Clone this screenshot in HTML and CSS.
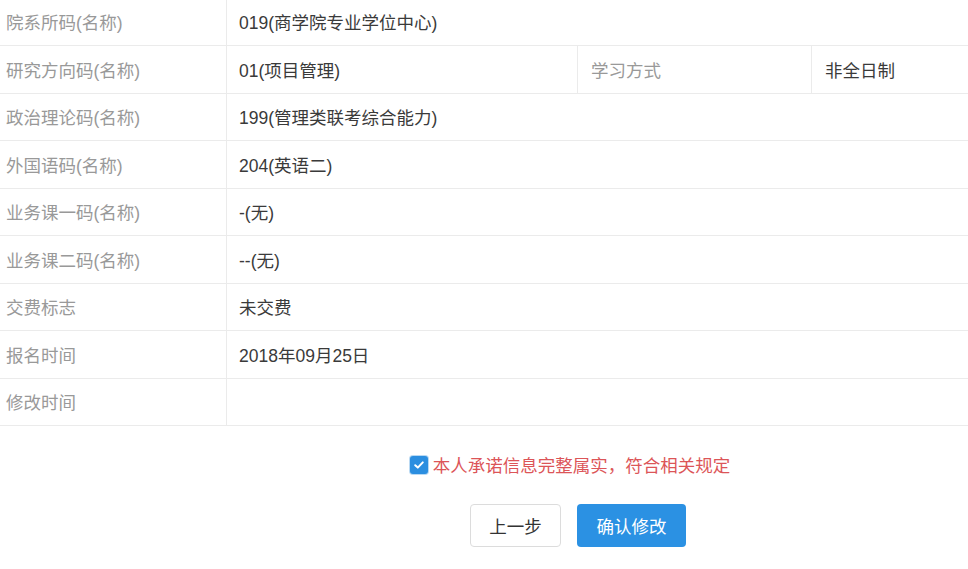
FILE: index.html
```html
<!DOCTYPE html>
<html lang="zh-CN">
<head>
    <meta charset="UTF-8">
    <meta name="viewport" content="width=device-width, initial-scale=1.0">
    <title>报名信息确认</title>
    <link rel="stylesheet" href="styles.css">
</head>
<body>
    <div class="info-table">
        <div class="row">
            <div class="label">院系所码(名称)</div>
            <div class="value">019(商学院专业学位中心)</div>
        </div>
        <div class="row">
            <div class="label">研究方向码(名称)</div>
            <div class="value value-narrow">01(项目管理)</div>
            <div class="label label-inner">学习方式</div>
            <div class="value value-end">非全日制</div>
        </div>
        <div class="row">
            <div class="label">政治理论码(名称)</div>
            <div class="value">199(管理类联考综合能力)</div>
        </div>
        <div class="row">
            <div class="label">外国语码(名称)</div>
            <div class="value">204(英语二)</div>
        </div>
        <div class="row">
            <div class="label">业务课一码(名称)</div>
            <div class="value">-(无)</div>
        </div>
        <div class="row">
            <div class="label">业务课二码(名称)</div>
            <div class="value">--(无)</div>
        </div>
        <div class="row">
            <div class="label">交费标志</div>
            <div class="value">未交费</div>
        </div>
        <div class="row">
            <div class="label">报名时间</div>
            <div class="value">2018年09月25日</div>
        </div>
        <div class="row">
            <div class="label">修改时间</div>
            <div class="value"></div>
        </div>
    </div>

    <div class="confirm">
        <label class="promise">
            <span class="checkbox">
                <svg width="12" height="12" viewBox="0 0 12 12">
                    <path d="M2.2 6.2 L4.8 8.6 L9.8 3.4" fill="none" stroke="#fff" stroke-width="2" stroke-linecap="round" stroke-linejoin="round"/>
                </svg>
            </span>
            本人承诺信息完整属实，符合相关规定
        </label>
        <div class="actions">
            <button class="btn btn-default">上一步</button>
            <button class="btn btn-primary">确认修改</button>
        </div>
    </div>
</body>
</html>
```

FILE: styles.css
```css
body {
    margin: 0;
    font-family: "Liberation Sans", "Noto Sans CJK SC", sans-serif;
    font-size: 17.5px;
    color: #3a3a3a;
    background: #fff;
}
.info-table {
    margin-top: -1.5px;
}
.row {
    display: flex;
    height: 46.5px;
    border-bottom: 1px solid #ebebeb;
}
.label {
    width: 227px;
    flex-shrink: 0;
    box-sizing: border-box;
    padding-left: 6px;
    border-right: 1px solid #ebebeb;
    color: #999;
    display: flex;
    align-items: center;
}
.value {
    flex: 1;
    padding-left: 12px;
    display: flex;
    align-items: center;
}
.value-narrow {
    flex: none;
    width: 338px;
    border-right: 1px solid #ebebeb;
}
.label-inner {
    width: 234px;
    padding-left: 13px;
}
.value-end {
    padding-left: 13px;
}
.confirm {
    display: flex;
    flex-direction: column;
    align-items: center;
    padding-left: 188px;
    padding-top: 26px;
}
.promise {
    display: flex;
    align-items: center;
    color: #dc5558;
    margin-left: -16px;
}
.checkbox {
    width: 18px;
    height: 18px;
    border-radius: 3px;
    background: #2b8ee0;
    box-shadow: 0 0 0 1px #b9d9f3;
    display: flex;
    align-items: center;
    justify-content: center;
    margin-right: 5px;
}
.actions {
    display: flex;
    gap: 16px;
    margin-top: 27px;
}
.btn {
    height: 43px;
    border-radius: 4px;
    font-family: inherit;
    font-size: 17.5px;
    cursor: pointer;
}
.btn-default {
    width: 91px;
    background: #fff;
    border: 1px solid #dcdcdc;
    color: #333;
}
.btn-primary {
    width: 109px;
    background: #2b91e3;
    border: none;
    color: #fff;
}
```
